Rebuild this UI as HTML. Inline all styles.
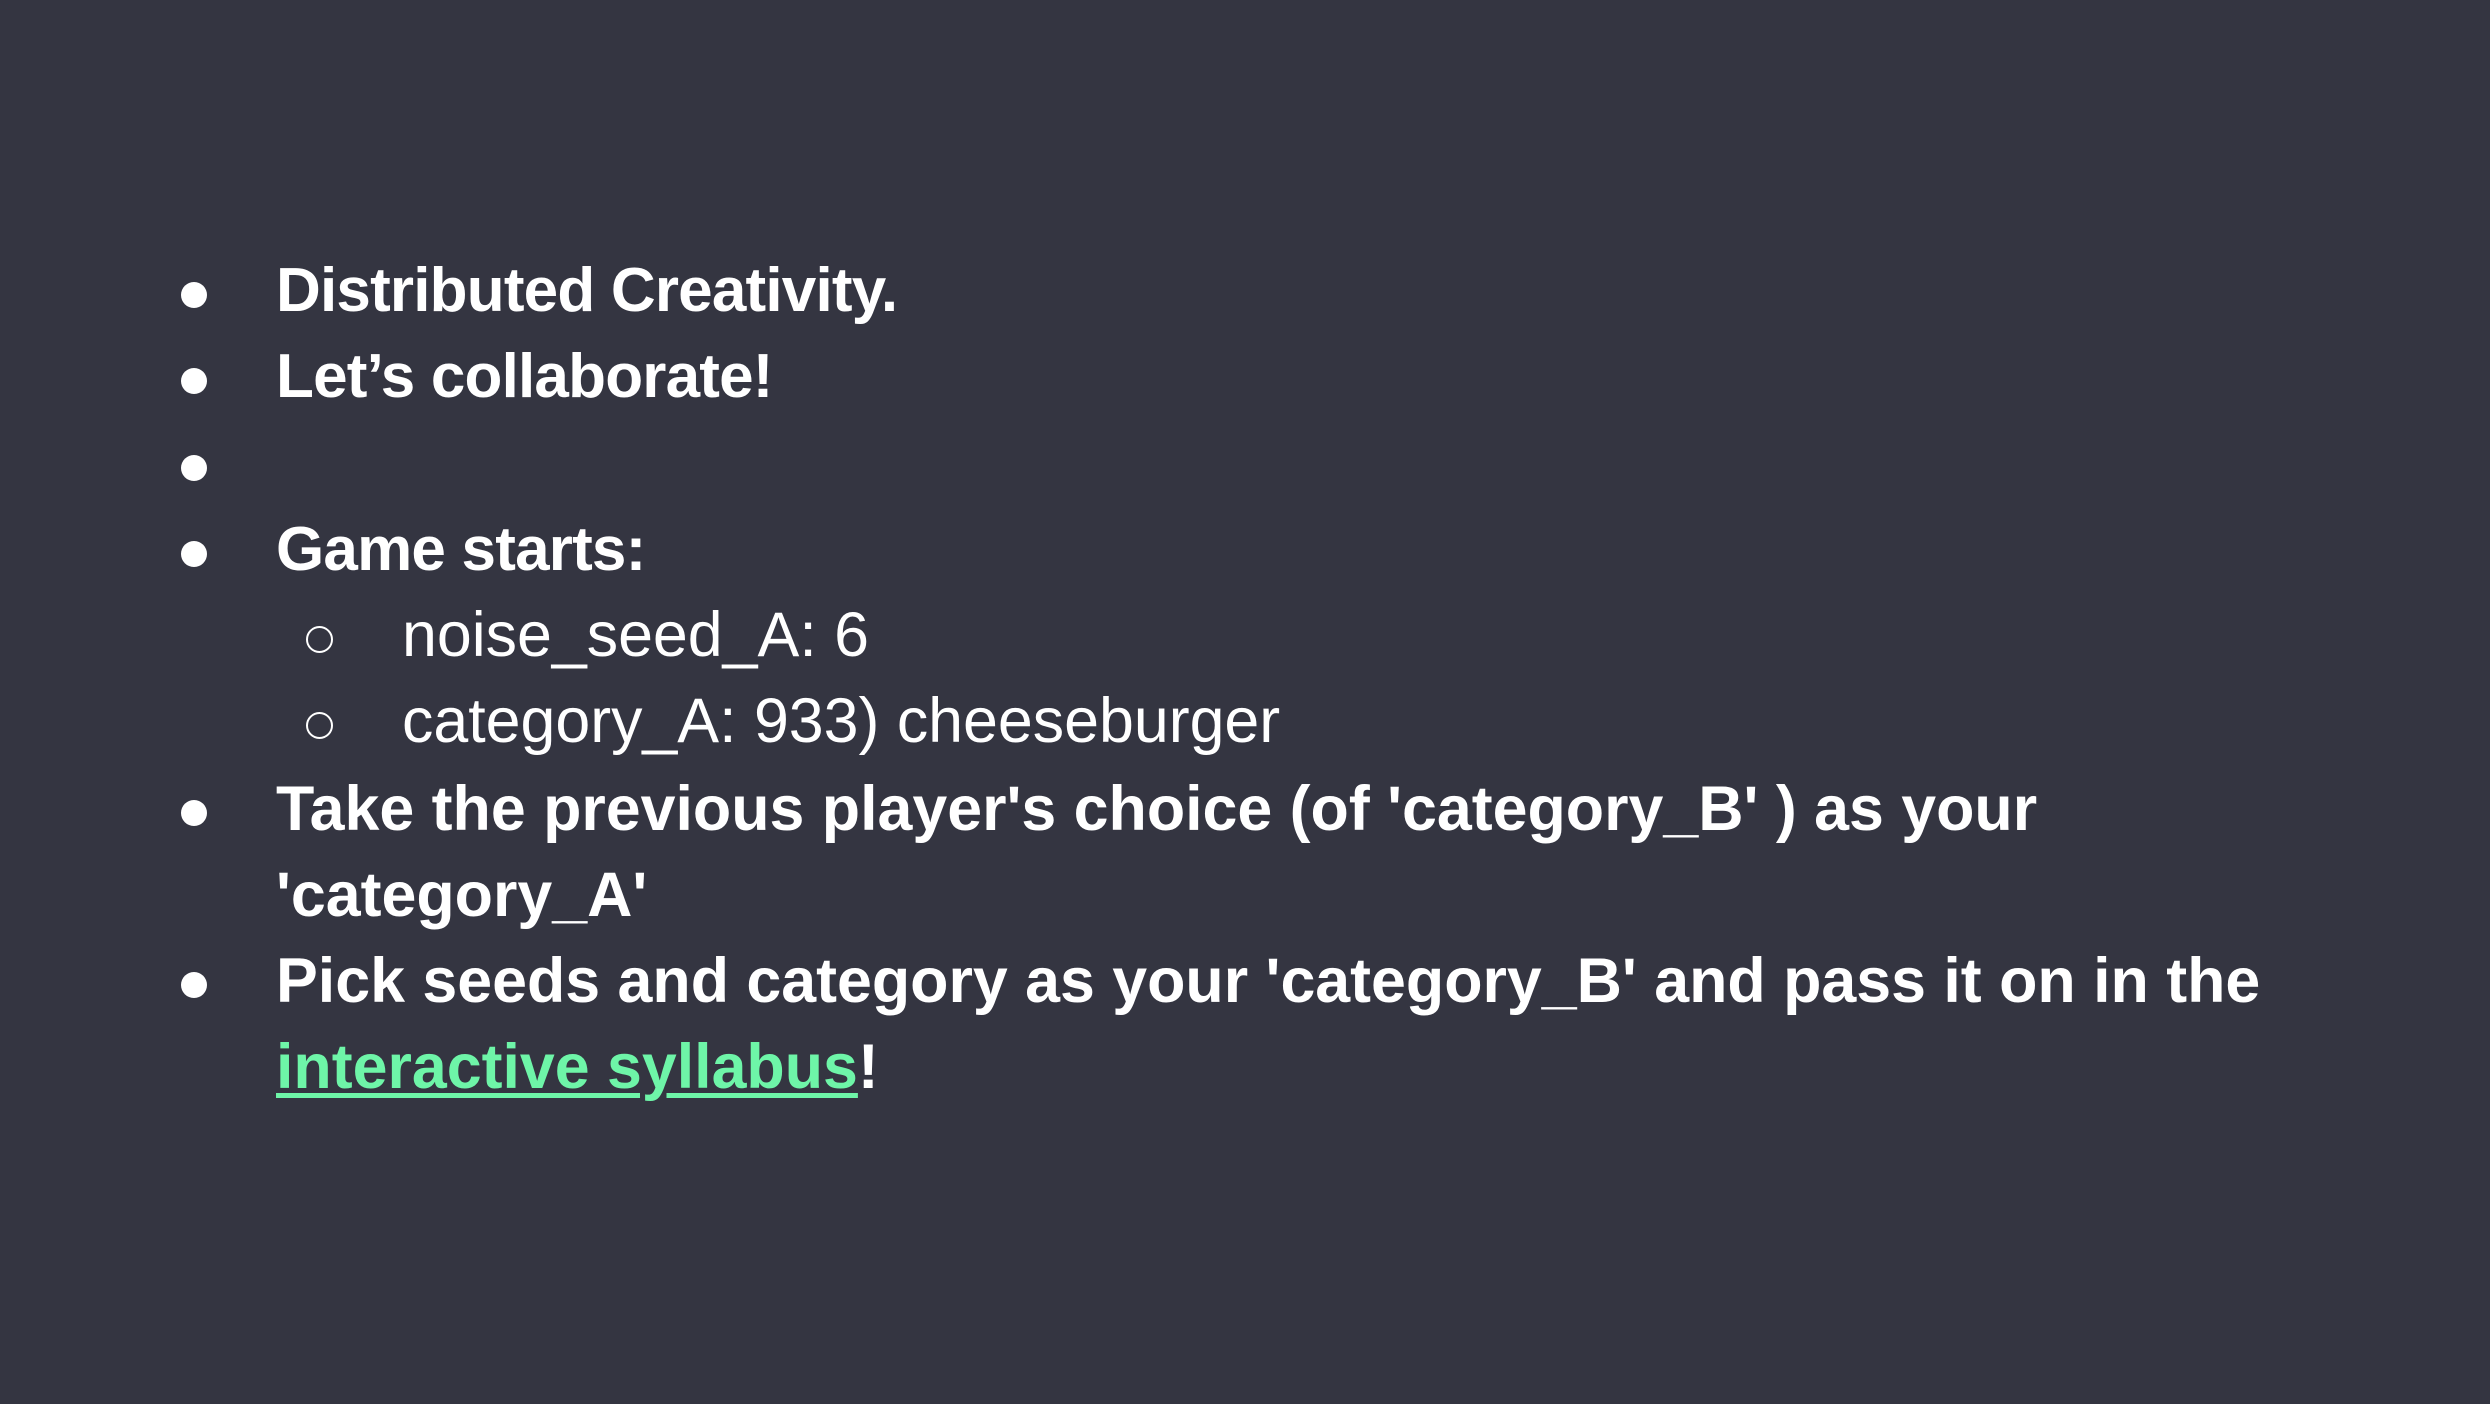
<!DOCTYPE html>
<html><head><meta charset="utf-8"><style>
html,body{margin:0;padding:0;}
body{width:2490px;height:1404px;background:#343541;position:relative;overflow:hidden;font-family:"Liberation Sans",Arial,sans-serif;color:#fff;}
.l{position:absolute;left:276px;line-height:86px;font-size:62.7px;font-weight:bold;white-space:nowrap;}
.h{letter-spacing:-0.8px;font-size:62px;}
.s{left:402px;font-weight:normal;font-size:62.7px;}
.b{position:absolute;left:181px;width:26px;height:26px;border-radius:50%;background:#fff;}
.c{position:absolute;left:306px;width:23px;height:23px;border-radius:50%;border:2px solid #fff;}
a{color:#6ef5a8;text-decoration:underline;text-decoration-thickness:5px;text-underline-offset:5px;}
</style></head><body>
<div class="b" style="top:282px"></div>
<div class="l h" style="top:248px">Distributed Creativity.</div>
<div class="b" style="top:368px"></div>
<div class="l h" style="top:334px">Let’s collaborate!</div>
<div class="b" style="top:455px"></div>
<div class="b" style="top:541px"></div>
<div class="l h" style="top:507px">Game starts:</div>
<div class="c" style="top:626px"></div>
<div class="l s" style="top:592px">noise_seed_A: 6</div>
<div class="c" style="top:712px"></div>
<div class="l s" style="top:678px">category_A: 933) cheeseburger</div>
<div class="b" style="top:800px"></div>
<div class="l" style="top:766px">Take the previous player's choice (of 'category_B' ) as your</div>
<div class="l" style="top:852px">'category_A'</div>
<div class="b" style="top:972px"></div>
<div class="l" style="top:938px">Pick seeds and category as your 'category_B' and pass it on in the</div>
<div class="l" style="top:1024px"><a>interactive syllabus</a>!</div>
</body></html>
